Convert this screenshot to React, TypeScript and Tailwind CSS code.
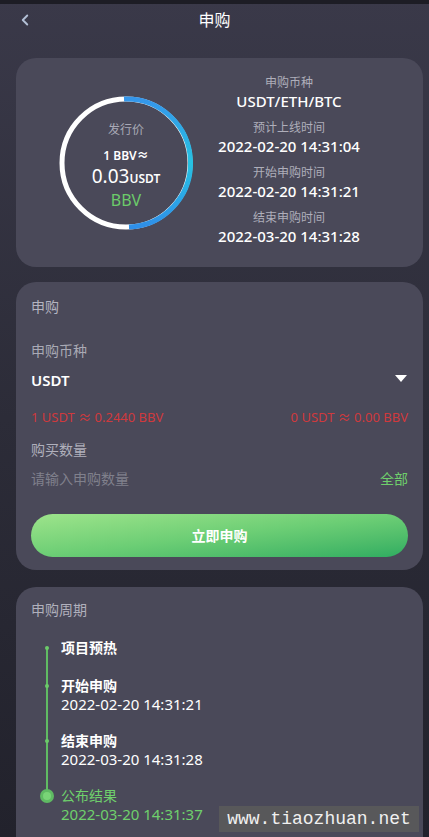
import React from 'react';
import { ChevronLeft } from 'lucide-react';

const font = { fontFamily: '"Noto Sans", "Noto Sans CJK SC", sans-serif' };

const infoRows = [
  { label: '申购币种', value: 'USDT/ETH/BTC' },
  { label: '预计上线时间', value: '2022-02-20 14:31:04' },
  { label: '开始申购时间', value: '2022-02-20 14:31:21' },
  { label: '结束申购时间', value: '2022-03-20 14:31:28' },
];

const steps = [
  { title: '项目预热', date: '' },
  { title: '开始申购', date: '2022-02-20 14:31:21' },
  { title: '结束申购', date: '2022-03-20 14:31:28' },
  { title: '公布结果', date: '2022-03-20 14:31:37', active: true },
];

const PriceRing: React.FC = () => (
  <div className="relative w-[134px] h-[134px] shrink-0">
    <svg width="134" height="134" viewBox="0 0 134 134" className="absolute inset-0">
      <defs>
        <linearGradient id="ring" x1="0" y1="0" x2="0" y2="1">
          <stop offset="0%" stopColor="#3596ea" />
          <stop offset="50%" stopColor="#27c2e2" />
          <stop offset="100%" stopColor="#2f8fe8" />
        </linearGradient>
      </defs>
      <circle cx="67" cy="67" r="64" fill="none" stroke="#ffffff" strokeWidth="5" />
      <path d="M 65 3 A 64 64 0 0 1 70 131" fill="none" stroke="url(#ring)" strokeWidth="5" />
    </svg>
    <div className="absolute inset-0 flex flex-col items-center pt-[26px]">
      <div className="text-[12px] leading-[16px] text-[#a9a9b6]">发行价</div>
      <div className="mt-[10px] text-[12px] leading-[16px] font-semibold text-white">1 BBV≈</div>
      <div className="mt-[1px] leading-[22px] text-white">
        <span className="text-[19px]">0.03</span>
        <span className="text-[12px] font-semibold">USDT</span>
      </div>
      <div className="text-[16px] leading-[20px] text-[#6ccb6a]">BBV</div>
    </div>
  </div>
);

const App: React.FC = () => {
  return (
    <div
      className="relative h-[837px] overflow-hidden bg-gradient-to-b from-[#3a3949] via-[#2c2c38] to-[#22222c]"
      style={font}
    >
      <div className="h-[4px] bg-[#1d1d25]" />

      {/* Header */}
      <header className="relative h-[32px] flex items-center justify-center">
        <ChevronLeft className="absolute left-[16px] text-[#b3c0d6]" size={18} strokeWidth={2.5} />
        <h1 className="text-[16px] text-white">申购</h1>
      </header>

      <div className="ml-[16px] mr-[6px] mt-[22px] flex flex-col gap-[15px]">
        {/* Overview */}
        <section className="bg-[#4a4959] rounded-[20px] h-[209px] flex items-center pl-[43px]">
          <PriceRing />
          <div className="ml-[16px] w-[160px] flex flex-col items-center gap-[9px] -mt-[4px]">
            {infoRows.map((r) => (
              <div key={r.label} className="flex flex-col items-center">
                <div className="text-[12px] leading-[16px] text-[#aeaeba]">{r.label}</div>
                <div className="text-[15px] leading-[20px] text-white font-medium whitespace-nowrap">{r.value}</div>
              </div>
            ))}
          </div>
        </section>

        {/* Subscribe form */}
        <section className="bg-[#4a4959] rounded-[20px] px-[15px] pt-[16px] pb-[13px]">
          <div className="text-[14px] leading-[18px] text-[#b4b4c0]">申购</div>
          <div className="mt-[26px] text-[14px] leading-[18px] text-[#a9a9b5]">申购币种</div>
          <div className="mt-[10px] flex items-center justify-between h-[20px]">
            <span className="text-[15px] font-semibold text-white">USDT</span>
            <svg width="12" height="8" viewBox="0 0 12 8" className="mr-[1px] -mt-[3px]">
              <path d="M0 0 H12 L6 7 Z" fill="#ffffff" />
            </svg>
          </div>
          <div className="mt-[19px] flex justify-between text-[13px] leading-[16px] text-[#d0393d]">
            <span>1 USDT ≈ 0.2440 BBV</span>
            <span>0 USDT ≈ 0.00 BBV</span>
          </div>
          <div className="mt-[16px] text-[14px] leading-[18px] text-[#b0b0bc]">购买数量</div>
          <div className="mt-[11px] flex justify-between text-[14px] leading-[18px]">
            <span className="text-[#80808c]">请输入申购数量</span>
            <span className="text-[#6fcf6c]">全部</span>
          </div>
          <button className="mt-[26px] w-full h-[43px] rounded-full bg-gradient-to-br from-[#9de48b] via-[#6cce75] to-[#2ead61] text-white text-[14px] font-bold">
            立即申购
          </button>
        </section>

        {/* Timeline */}
        <section className="bg-[#4a4959] rounded-[20px] px-[15px] pt-[14px] h-[300px] mt-[2px]">
          <div className="text-[14px] leading-[18px] text-[#b0b0bc]">申购周期</div>
          <div className="relative mt-[20px]">
            <div className="absolute left-[15px] top-[8px] h-[150px] w-[2px] bg-[#60bb63]" />
            <div className="flex flex-col gap-[19px]">
              {steps.map((s, i) => (
                <div key={s.title} className={`relative pl-[30px] ${i === 0 ? 'mb-[1px]' : ''}`}>
                  {s.active ? (
                    <span className="absolute left-[9px] top-[2px] w-[14px] h-[14px] rounded-full bg-[#5fba63] flex items-center justify-center">
                      <span className="w-[8px] h-[8px] rounded-full bg-[#79d477]" />
                    </span>
                  ) : (
                    <span className="absolute left-[14px] top-[7px] w-[4px] h-[4px] rounded-full bg-[#6ccb6a]" />
                  )}
                  <div
                    className={`text-[14px] leading-[18px] ${s.active ? 'text-[#6fd06c]' : 'text-white font-semibold'}`}
                  >
                    {s.title}
                  </div>
                  {s.date && (
                    <div className={`text-[15px] leading-[18px] ${s.active ? 'text-[#6fd06c]' : 'text-white'}`}>
                      {s.date}
                    </div>
                  )}
                </div>
              ))}
            </div>
          </div>
        </section>
      </div>

      {/* Watermark */}
      <div
        className="absolute left-[219px] top-[806px] w-[200px] h-[26px] bg-[#5a5a5a]/90 flex items-center justify-center text-[18px] text-[#f0f0f0]"
        style={{ fontFamily: '"Liberation Mono", monospace' }}
      >
        www.tiaozhuan.net
      </div>
    </div>
  );
};

export default App;
